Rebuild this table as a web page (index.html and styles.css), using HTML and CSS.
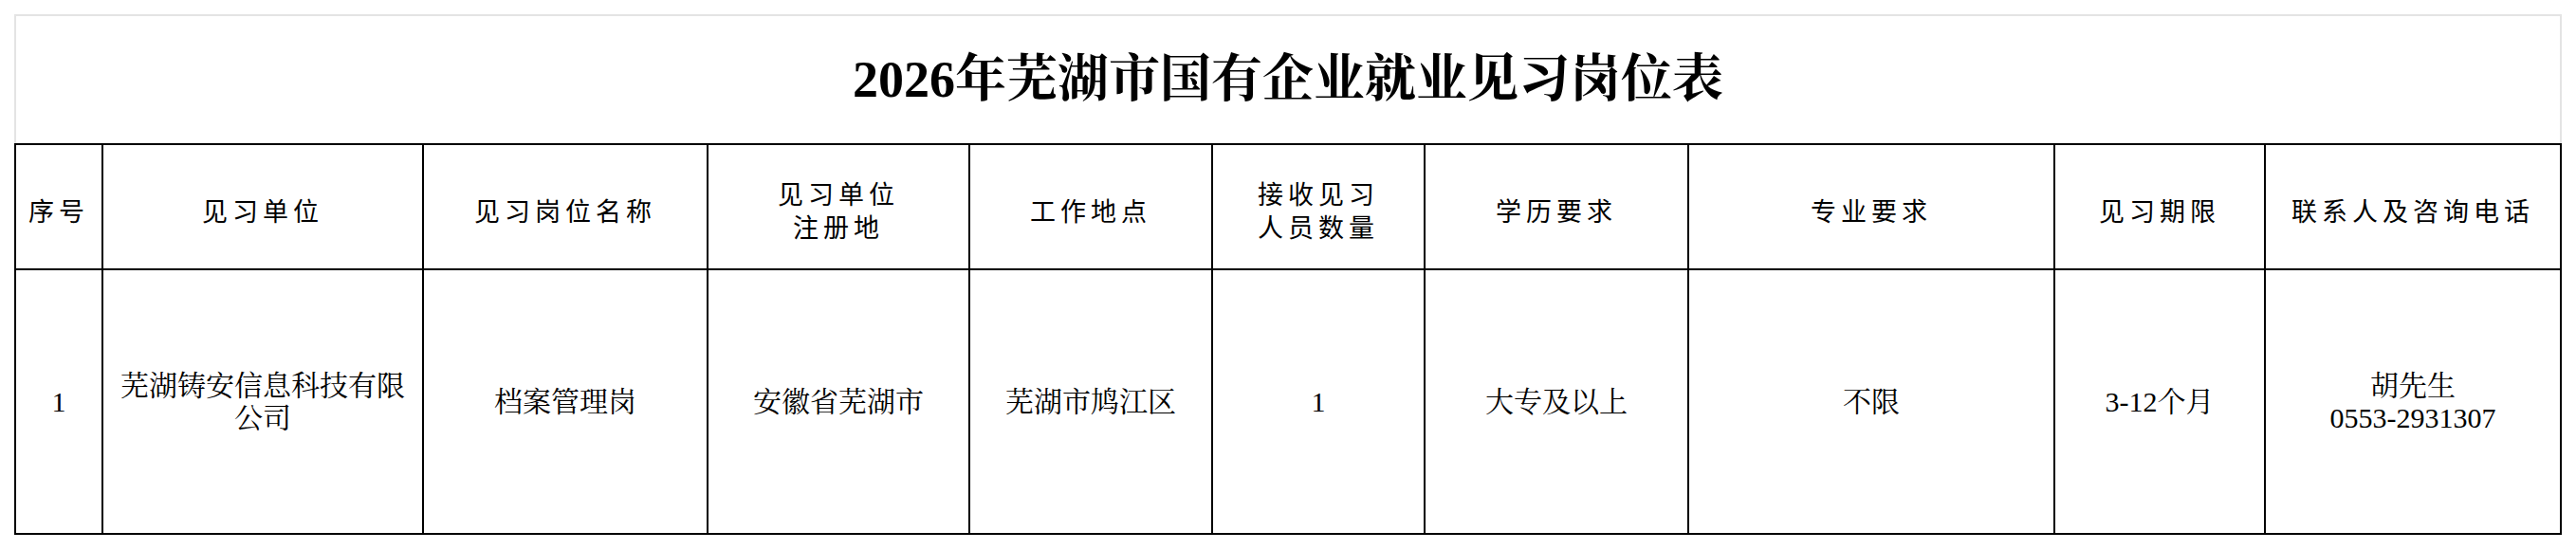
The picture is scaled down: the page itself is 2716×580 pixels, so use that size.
FILE: index.html
```html
<!DOCTYPE html>
<html lang="zh-CN">
<head>
<meta charset="utf-8">
<title>2026年芜湖市国有企业就业见习岗位表</title>
<link rel="stylesheet" href="styles.css">
</head>
<body>
<table class="sheet">
  <colgroup>
    <col class="c-no">
    <col class="c-unit">
    <col class="c-post">
    <col class="c-reg">
    <col class="c-place">
    <col class="c-count">
    <col class="c-edu">
    <col class="c-major">
    <col class="c-term">
    <col class="c-contact">
  </colgroup>
  <tr class="title-row">
    <td class="title" colspan="10">2026年芜湖市国有企业就业见习岗位表</td>
  </tr>
  <tr class="head-row">
    <th>序号</th>
    <th>见习单位</th>
    <th>见习岗位名称</th>
    <th>见习单位<br>注册地</th>
    <th>工作地点</th>
    <th>接收见习<br>人员数量</th>
    <th>学历要求</th>
    <th>专业要求</th>
    <th>见习期限</th>
    <th>联系人及咨询电话</th>
  </tr>
  <tr class="data-row">
    <td>1</td>
    <td>芜湖铸安信息科技有限公司</td>
    <td>档案管理岗</td>
    <td>安徽省芜湖市</td>
    <td>芜湖市鸠江区</td>
    <td>1</td>
    <td>大专及以上</td>
    <td>不限</td>
    <td>3-12个月</td>
    <td>胡先生<br>0553-2931307</td>
  </tr>
</table>
</body>
</html>
```

FILE: styles.css
```css
html, body {
  margin: 0;
  padding: 0;
  background: #ffffff;
}

body {
  padding: 15px;
}

.sheet {
  border-collapse: collapse;
  table-layout: fixed;
  width: 2686px;
  color: #000000;
}

.c-no { width: 92px; }
.c-unit { width: 338px; }
.c-post { width: 300px; }
.c-reg { width: 276px; }
.c-place { width: 256px; }
.c-count { width: 224px; }
.c-edu { width: 278px; }
.c-major { width: 386px; }
.c-term { width: 222px; }
.c-contact { width: 312px; }

.title {
  height: 134px;
  padding: 0;
  border: 2px solid #e4e4e4;
  border-bottom: 2px solid #000000;
  text-align: center;
  vertical-align: middle;
  font-family: "Liberation Serif", "Noto Serif CJK SC", "Noto Sans CJK SC", serif;
  font-weight: bold;
  font-size: 54px;
  line-height: 60px;
}

.head-row th {
  height: 124px;
  padding: 6px 4px 0;
  border: 2px solid #000000;
  text-align: center;
  vertical-align: middle;
  font-family: "Noto Sans CJK SC", sans-serif;
  font-weight: normal;
  font-size: 27px;
  letter-spacing: 5px;
  line-height: 35px;
}

.data-row td {
  height: 277px;
  padding: 0 10px;
  border: 2px solid #000000;
  text-align: center;
  vertical-align: middle;
  font-family: "Liberation Serif", "Noto Serif CJK SC", "Noto Sans CJK SC", serif;
  font-size: 30px;
  line-height: 34px;
}
```
